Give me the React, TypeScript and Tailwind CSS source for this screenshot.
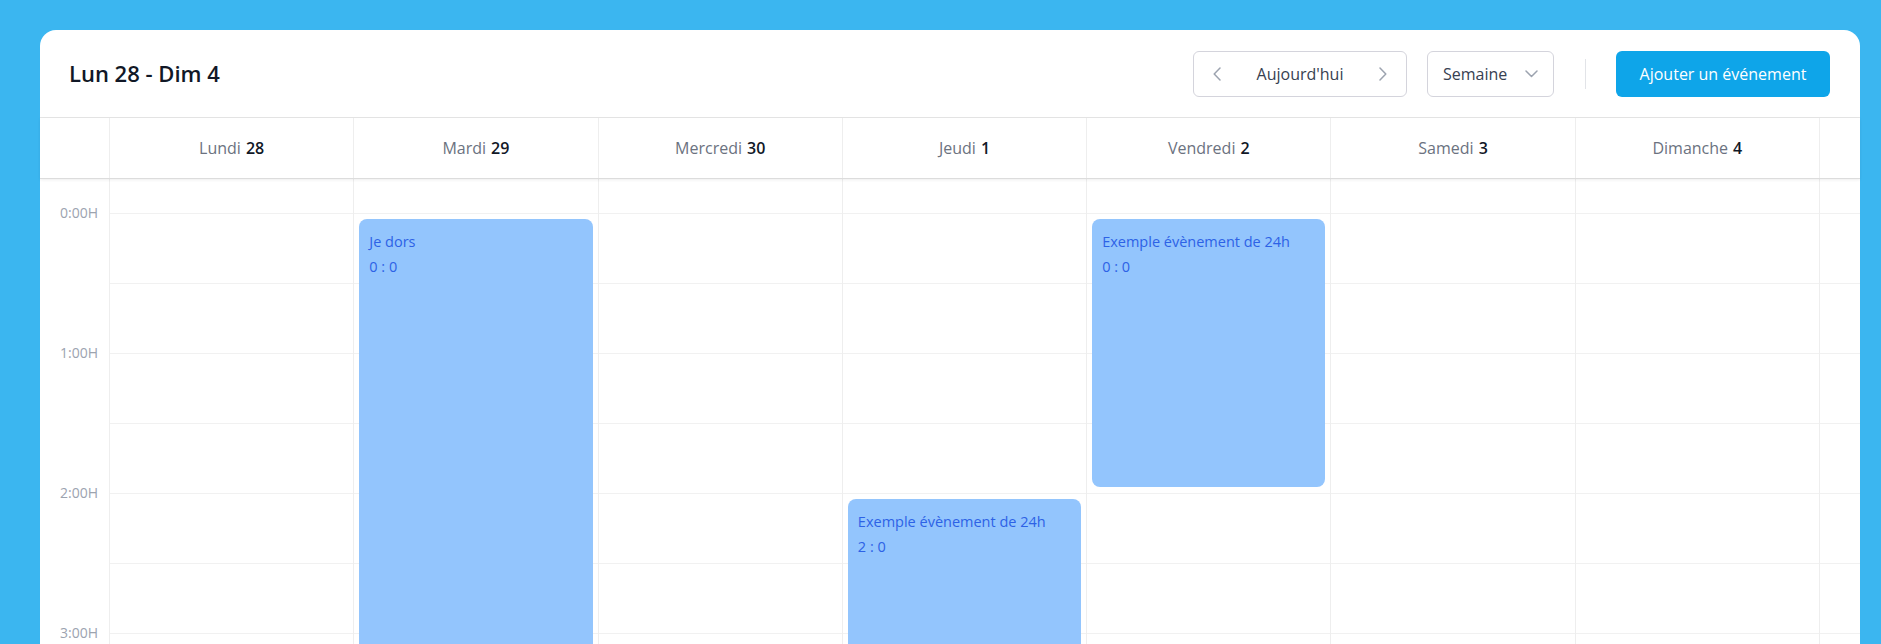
import React from "react";

const days = [
  { name: "Lundi", num: "28" },
  { name: "Mardi", num: "29" },
  { name: "Mercredi", num: "30" },
  { name: "Jeudi", num: "1" },
  { name: "Vendredi", num: "2" },
  { name: "Samedi", num: "3" },
  { name: "Dimanche", num: "4" },
];

type Ev = { day: number; title: string; time: string; top: number; height: number };

const events: Ev[] = [
  { day: 1, title: "Je dors", time: "0 : 0", top: 40, height: 1108 },
  { day: 3, title: "Exemple évènement de 24h", time: "2 : 0", top: 320, height: 268 },
  { day: 4, title: "Exemple évènement de 24h", time: "0 : 0", top: 40, height: 268 },
];

const hours = [0, 1, 2, 3, 4, 5];
const rows = Array.from({ length: 12 }, (_, i) => i);

function ChevronLeft() {
  return (
    <svg width="8" height="14" viewBox="0 0 8 14" fill="none">
      <path d="M7 1 L1.2 7 L7 13" stroke="#9ca3af" strokeWidth="1.5" strokeLinecap="round" strokeLinejoin="round" />
    </svg>
  );
}

function ChevronRight() {
  return (
    <svg width="8" height="14" viewBox="0 0 8 14" fill="none">
      <path d="M1 1 L6.8 7 L1 13" stroke="#9ca3af" strokeWidth="1.5" strokeLinecap="round" strokeLinejoin="round" />
    </svg>
  );
}

function ChevronDown() {
  return (
    <svg width="13" height="8" viewBox="0 0 13 8" fill="none">
      <path d="M1 1 L6.5 6.5 L12 1" stroke="#9ca3af" strokeWidth="1.5" strokeLinecap="round" strokeLinejoin="round" />
    </svg>
  );
}

export default function App() {
  return (
    <div
      className="h-screen overflow-hidden bg-[#3bb6f0] pt-[30px] pl-[40px] pr-[21px]"
      style={{ fontFamily: '"Open Sans", "Noto Sans", sans-serif' }}
    >
      <div className="bg-white rounded-2xl h-[1400px] flex flex-col">
        <header className="h-[88px] shrink-0 border-b border-[#e6e6e6] flex items-center justify-between pl-[29px] pr-[30px]">
          <h1 className="text-[22px] font-semibold text-[#111827]">Lun 28 - Dim 4</h1>
          <div className="flex items-center">
            <div className="w-[214px] h-[46px] rounded-md border border-[#d4d4dc] flex items-center justify-between px-[19px]">
              <ChevronLeft />
              <span className="text-base text-[#374151]">Aujourd'hui</span>
              <ChevronRight />
            </div>
            <div className="ml-[20px] w-[127px] h-[46px] rounded-md border border-[#d4d4dc] flex items-center pl-[15px] gap-[18px]">
              <span className="text-base text-[#374151]">Semaine</span>
              <ChevronDown />
            </div>
            <div className="ml-[31px] mr-[30px] w-px h-[30px] bg-[#e2e4e8]" />
            <button className="w-[214px] h-[46px] rounded-md bg-[#0ea5e9] text-white text-base">
              Ajouter un événement
            </button>
          </div>
        </header>

        <div className="relative z-10 h-[61px] shrink-0 grid grid-cols-[70px_repeat(7,minmax(0,1fr))_40px] border-b border-[#dcdcdc] shadow-[0_1px_3px_rgba(0,0,0,0.07)] bg-white">
          <div className="border-r border-[#eeeeee]" />
          {days.map((d) => (
            <div key={d.name} className="border-r border-[#eeeeee] flex items-center justify-center text-base">
              <span className="text-[#6b7280]">{d.name}</span>
              <span className="ml-[5px] font-semibold text-[#111827]">{d.num}</span>
            </div>
          ))}
          <div />
        </div>

        <div className="flex-1 grid grid-cols-[70px_repeat(7,minmax(0,1fr))_40px]">
          <div className="border-r border-[#eeeeee] pt-[24px]">
            {hours.map((h) => (
              <div key={h} className="h-[140px] text-right pr-[11px] text-sm leading-5 text-[#9ca3af]">
                {h}:00H
              </div>
            ))}
          </div>
          {days.map((d, i) => (
            <div key={d.name} className="relative border-r border-[#eeeeee] pt-[34px]">
              {rows.map((r) => (
                <div key={r} className="h-[70px] border-t border-[#f1f1f1]" />
              ))}
              {events
                .filter((e) => e.day === i)
                .map((e, k) => (
                  <div
                    key={k}
                    className="absolute left-[5px] right-[5px] rounded-lg bg-[#93c5fd] pl-[10px] pt-[13px] text-[14.5px] text-[#2d62e6]"
                    style={{ top: e.top, height: e.height }}
                  >
                    <div className="leading-5">{e.title}</div>
                    <div className="leading-5 mt-[5px]">{e.time}</div>
                  </div>
                ))}
            </div>
          ))}
          <div className="pt-[34px]">
            {rows.map((r) => (
              <div key={r} className="h-[70px] border-t border-[#f1f1f1]" />
            ))}
          </div>
        </div>
      </div>
    </div>
  );
}
